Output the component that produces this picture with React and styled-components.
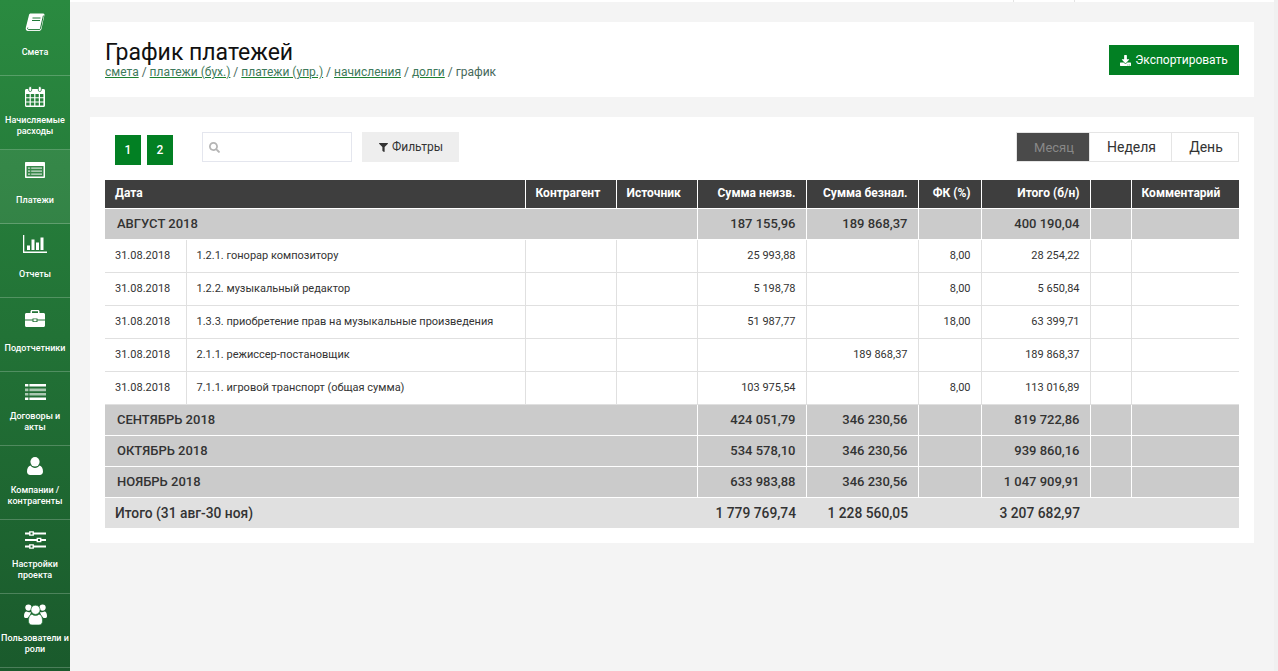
import React from "react";
import styled, { createGlobalStyle } from "styled-components";
import { FaDownload, FaFilter, FaSearch } from "react-icons/fa";

const Global = createGlobalStyle`
  html, body { margin: 0; padding: 0; height: 100%; overflow: hidden; background: #f4f4f4; }
  body { font-family: Roboto, "Liberation Sans", sans-serif; color: #333; }
  #root { height: 100%; }
  * { box-sizing: border-box; }
`;

const Layout = styled.div`
  display: flex;
  width: 1278px;
  height: 671px;
  overflow: hidden;
`;
const Sidebar = styled.nav`
  width: 70px;
  flex: none;
  height: 671px;
  padding-top: 2px;
  background: linear-gradient(180deg, #2a8a40 0%, #1a5a2c 100%);
  overflow: hidden;
`;
const NavItem = styled.a`
  display: flex;
  flex-direction: column;
  align-items: center;
  height: 74px;
  padding-top: 9px;
  border-bottom: 1px solid rgba(255, 255, 255, 0.22);
  background: ${(p) => (p.$active ? "rgba(255,255,255,0.07)" : "transparent")};
  color: #fff;
  font-size: 9px;
  font-weight: 500;
  line-height: 10.5px;
  text-align: center;
  white-space: nowrap;
`;
const NavIcon = styled.span`
  height: 22px;
  display: flex;
  align-items: center;
  justify-content: center;
  margin-bottom: ${(p) => p.$mb ?? 14}px;
`;
const Main = styled.main`
  flex: 1;
  min-width: 0;
  padding: 0 20px;
`;
const ScrollTrack = styled.div`
  width: 4px;
  flex: none;
  background: #f0f0f0;
`;
const TopStrip = styled.div`
  height: 2px;
  margin: 0 -20px 20px;
  background: #fff;
  display: flex;
  justify-content: flex-end;
  padding-right: 199px;
`;
const TopCell = styled.i`
  width: 62px;
  height: 2px;
  border-left: 1px solid #e3e3e3;
  border-right: 1px solid #e3e3e3;
`;
const HeaderCard = styled.section`
  height: 75px;
  background: #fff;
  padding: 17px 15px 0;
  display: flex;
  justify-content: space-between;
  margin-bottom: 20px;
`;
const Title = styled.h1`
  margin: 0;
  font-size: 23px;
  line-height: 28px;
  height: 26px;
  font-weight: 400;
  color: #111;
`;
const Crumbs = styled.div`
  font-size: 12px;
  line-height: 15px;
  color: #46685a;
`;
const Crumb = styled.a`
  color: #3f7a5c;
  text-decoration: underline;
  text-decoration-color: #1c8030;
`;
const ExportButton = styled.button`
  width: 130px;
  height: 30px;
  margin-top: 6px;
  border: 0;
  background: #028023;
  color: #fff;
  font: 400 12px Roboto, sans-serif;
  display: flex;
  align-items: center;
  justify-content: center;
  gap: 4px;
`;
const TableCard = styled.section`
  height: 426px;
  background: #fff;
  padding: 15px;
`;
const Toolbar = styled.div`
  display: flex;
  height: 48px;
  align-items: flex-start;
`;
const Pager = styled.div`
  display: flex;
  gap: 6px;
  margin: 3px 0 0 10px;
  width: 87px;
`;
const Page = styled.span`
  width: 26px;
  height: 30px;
  background: #028023;
  color: #fff;
  font-size: 12px;
  font-weight: 500;
  display: flex;
  align-items: center;
  justify-content: center;
`;
const Search = styled.div`
  width: 150px;
  height: 30px;
  border: 1px solid #e4e6ee;
  display: flex;
  align-items: center;
  padding-left: 6px;
  color: #b5b5b5;
  font-size: 11px;
`;
const FilterButton = styled.button`
  width: 97px;
  height: 30px;
  margin-left: 10px;
  padding-left: 7px;
  border: 0;
  background: #eee;
  color: #333;
  font: 400 12px Roboto, sans-serif;
  display: flex;
  align-items: center;
  justify-content: center;
  gap: 4px;
`;
const Segments = styled.div`
  margin-left: auto;
  display: flex;
  height: 30px;
  border: 1px solid #e5e5e5;
`;
const Segment = styled.span`
  width: ${(p) => p.$w}px;
  display: flex;
  align-items: center;
  justify-content: center;
  font-size: ${(p) => (p.$active ? 13 : 14)}px;
  background: ${(p) => (p.$active ? "#4a4a4a" : "#fff")};
  color: ${(p) => (p.$active ? "#888" : "#333")};
  border-left: ${(p) => (p.$first ? "0" : "1px solid #e5e5e5")};
  padding-left: 2px;
`;
const Table = styled.table`
  width: 1134px;
  table-layout: fixed;
  border-collapse: collapse;
  font-size: 11px;
`;
const Th = styled.th`
  height: 28px;
  padding: 0 10px 2px;
  background: #3e3e3e;
  color: #fff;
  font-size: 12px;
  font-weight: 700;
  text-align: ${(p) => p.$align || "left"};
  border-left: 1px solid #fff;
  border-bottom: 1px solid #fff;
  &:first-child { border-left: 0; }
`;
const Td = styled.td`
  height: 33px;
  padding: 0 10px;
  color: #333;
  text-align: ${(p) => p.$align || "left"};
  border: 1px solid #e0e0e0;
  border-top: 0;
  &:first-child { border-left: 0; }
  &:last-child { border-right: 0; }
`;
const GroupRow = styled.tr`
  background: ${(p) => (p.$total ? "#e0e0e0" : "#cbcbcb")};
`;
const GroupCell = styled.td`
  height: 31px;
  padding: 0 10px 0 ${(p) => (p.$total ? 10 : p.$pad ? 12 : 10)}px;
  font-size: ${(p) => (p.$total ? 13.8 : 13)}px;
  font-weight: 500;
  color: #333;
  text-align: ${(p) => p.$align || "left"};
  border-left: ${(p) => (p.$total ? "0" : "1px solid #fff")};
  border-bottom: ${(p) => (p.$total ? "0" : "1px solid #fff")};
  &:first-child { border-left: 0; }
`;

const BG = "#1f7a38";

const BookIcon = () => (
  <svg width="20" height="19" viewBox="0 0 20 19" fill="#fff">
    <path d="M5.6 0.5H18.2C19.2 0.5 19.7 1.3 19.4 2.3L16.6 15.6C16.3 17 15.3 18 14.1 18H3C1.4 18 0.4 16.4 0.8 14.8L4 2C4.3 1 4.8 0.5 5.6 0.5Z" />
    <path d="M2.8 14.6C2.2 15.6 2.8 16.6 3.7 16.6H14.2C15 16.6 15.3 16 15.5 15.4L18.4 2.6" fill="none" stroke={BG} strokeWidth="1" />
    <path d="M7.5 5H15.5M7 7.5H15" stroke={BG} strokeWidth="1" />
  </svg>
);

const calendarCells = [0, 1, 2].flatMap((r) =>
  [0, 1, 2, 3].map((c) => {
    const x = 1.2 + c * 4.6;
    const y = 8 + r * 4.2;
    return `M${x} ${y}h3.4v3.2h-3.4z`;
  })
).join("");
const CalendarIcon = () => (
  <svg width="20" height="21" viewBox="0 0 20 21" fill="#fff">
    <path fillRule="evenodd" d={`M1.5 3H18.5C19.4 3 20 3.6 20 4.5V19.5C20 20.4 19.4 21 18.5 21H1.5C.6 21 0 20.4 0 19.5V4.5C0 3.6.6 3 1.5 3Z${calendarCells}`} />
    <rect x="3.7" y="0.5" width="3" height="5" rx="1.4" stroke={BG} strokeWidth="0.8" />
    <rect x="13.3" y="0.5" width="3" height="5" rx="1.4" stroke={BG} strokeWidth="0.8" />
  </svg>
);

const ListAltIcon = () => (
  <svg width="20" height="16" viewBox="0 0 20 16" fill="#fff">
    <path fillRule="evenodd" d="M1 0H19C19.6 0 20 .4 20 1V15C20 15.6 19.6 16 19 16H1C.4 16 0 15.6 0 15V1C0 .4.4 0 1 0ZM1.5 4V14.5H18.5V4Z" />
    <path d="M3 5.5H5.2V6.8H3ZM6.2 5.5H17V6.8H6.2ZM3 8.5H5.2V9.8H3ZM6.2 8.5H17V9.8H6.2ZM3 11.4H5.2V12.7H3ZM6.2 11.4H17V12.7H6.2Z" opacity="0.75" />
  </svg>
);

const ChartIcon = () => (
  <svg width="24" height="18" viewBox="0 0 24 18" fill="#fff">
    <path d="M0 0H1.3V16.5H24V18H0ZM4 10.5H7V15H4ZM8.5 4.5H11.5V15H8.5ZM13 7.5H16V15H13ZM17.5 2.5H20.5V15H17.5Z" />
  </svg>
);

const BriefcaseIcon = () => (
  <svg width="20" height="17" viewBox="0 0 20 17" fill="#fff">
    <path fillRule="evenodd" d="M7 0H13C13.8 0 14.5 .6 14.5 1.5V3H18.5C19.4 3 20 3.6 20 4.5V9.5H12.5V8.5H7.5V9.5H0V4.5C0 3.6.6 3 1.5 3H5.5V1.5C5.5 .6 6.2 0 7 0ZM7 1.3V3H13V1.3Z" />
    <path d="M0 10.5H7.5V12H12.5V10.5H20V15.5C20 16.4 19.4 17 18.5 17H1.5C.6 17 0 16.4 0 15.5ZM8.5 9.3H11.5V11.2H8.5Z" />
  </svg>
);

const ListIcon = () => (
  <svg width="21" height="16" viewBox="0 0 21 16" fill="#fff">
    <path d="M0 0H3.4V2.6H0ZM4.4 0H21V2.6H4.4ZM0 13.4H3.4V16H0ZM4.4 13.4H21V16H4.4Z" />
    <path d="M0 4.5H3.4V7.2H0ZM4.4 4.5H21V7.2H4.4ZM0 8.9H3.4V11.6H0ZM4.4 8.9H21V11.6H4.4Z" opacity="0.62" />
  </svg>
);

const UserIcon = () => (
  <svg width="16" height="18" viewBox="0 0 16 18" fill="#fff">
    <ellipse cx="8" cy="4.8" rx="4.6" ry="4.8" />
    <path d="M0 14.6C0 11.6 1.4 9 3.4 8.6C4.6 10.2 6.2 10.9 8 10.9C9.8 10.9 11.4 10.2 12.6 8.6C14.6 9 16 11.6 16 14.6C16 16.8 14.6 18 12.8 18H3.2C1.4 18 0 16.8 0 14.6Z" />
  </svg>
);

const slider = (y, x) =>
  `M0 ${y - 0.9}H${x - 2.4}V${y + 0.9}H0Z` +
  `M${x + 2.4} ${y - 0.9}H21V${y + 0.9}H${x + 2.4}Z` +
  `M${x - 2.4} ${y - 2.3}H${x + 2.4}V${y + 2.3}H${x - 2.4}Z` +
  `M${x - 1} ${y - 1}V${y + 1}H${x + 1}V${y - 1}Z`;
const SlidersIcon = () => (
  <svg width="21" height="18" viewBox="0 0 21 18" fill="#fff">
    <path fillRule="evenodd" d={slider(2.5, 6.5) + slider(9, 14) + slider(15.5, 6.5)} />
  </svg>
);

const UsersIcon = () => (
  <svg width="23" height="21" viewBox="0 0 23 21" fill="#fff">
    <circle cx="4.4" cy="3.6" r="3.1" />
    <circle cx="18.6" cy="3.6" r="3.1" />
    <path d="M0 12C0 9.6 1 7.6 2.6 7.6C4 8.6 6 8.4 7 8C6.6 10.5 5 12.5 3.5 14H1.4C.5 14 0 13.2 0 12ZM23 12C23 9.6 22 7.6 20.4 7.6C19 8.6 17 8.4 16 8C16.4 10.5 18 12.5 19.5 14H21.6C22.5 14 23 13.2 23 12Z" />
    <circle cx="11.5" cy="5.8" r="4.6" stroke={BG} strokeWidth="0.7" />
    <path d="M4.5 17C4.5 13.4 5.8 10.4 8 10.2C9 11 10.2 11.4 11.5 11.4C12.8 11.4 14 11 15 10.2C17.2 10.4 18.5 13.4 18.5 17C18.5 19.6 17 21 15 21H8C6 21 4.5 19.6 4.5 17Z" stroke={BG} strokeWidth="0.7" />
  </svg>
);

const nav = [
  { label: ["Смета"], icon: <BookIcon /> },
  { label: ["Начисляемые", "расходы"], icon: <CalendarIcon />, mb: 8 },
  { label: ["Платежи"], icon: <ListAltIcon /> },
  { label: ["Отчеты"], icon: <ChartIcon /> },
  { label: ["Подотчетники"], icon: <BriefcaseIcon /> },
  { label: ["Договоры и", "акты"], icon: <ListIcon />, mb: 8 },
  { label: ["Компании /", "контрагенты"], icon: <UserIcon />, mb: 8 },
  { label: ["Настройки", "проекта"], icon: <SlidersIcon />, mb: 8 },
  { label: ["Пользователи и", "роли"], icon: <UsersIcon />, mb: 8 },
].map((n, i) => ({ ...n, active: i === 2 }));

const columns = [81, 339, 91, 81, 109, 112, 63, 109, 41, 108];
const rows = [
  ["1.2.1. гонорар композитору", "25 993,88", "", "8,00", "28 254,22"],
  ["1.2.2. музыкальный редактор", "5 198,78", "", "8,00", "5 650,84"],
  ["1.3.3. приобретение прав на музыкальные произведения", "51 987,77", "", "18,00", "63 399,71"],
  ["2.1.1. режиссер-постановщик", "", "189 868,37", "", "189 868,37"],
  ["7.1.1. игровой транспорт (общая сумма)", "103 975,54", "", "8,00", "113 016,89"],
];

const Group = ({ name, a, b, c, total }) => (
  <GroupRow $total={total}>
    <GroupCell colSpan={4} $pad $total={total}>{name}</GroupCell>
    <GroupCell $align="right" $total={total}>{a}</GroupCell>
    <GroupCell $align="right" $total={total}>{b}</GroupCell>
    <GroupCell $total={total} />
    <GroupCell $align="right" $total={total}>{c}</GroupCell>
    <GroupCell $total={total} />
    <GroupCell $total={total} />
  </GroupRow>
);

export default function App() {
  return (
    <Layout>
      <Global />
      <Sidebar>
        {nav.map((n) => (
          <NavItem key={n.label[0]} $active={n.active}>
            <NavIcon $mb={n.mb}>{n.icon}</NavIcon>
            {n.label.map((l) => <span key={l}>{l}</span>)}
          </NavItem>
        ))}
      </Sidebar>
      <Main>
        <TopStrip><TopCell /></TopStrip>
        <HeaderCard>
          <div>
            <Title>График платежей</Title>
            <Crumbs>
              <Crumb>смета</Crumb> / <Crumb>платежи (бух.)</Crumb> / <Crumb>платежи (упр.)</Crumb> / <Crumb>начисления</Crumb> / <Crumb>долги</Crumb> / график
            </Crumbs>
          </div>
          <ExportButton><FaDownload size={11} /> Экспортировать</ExportButton>
        </HeaderCard>
        <TableCard>
          <Toolbar>
            <Pager><Page>1</Page><Page>2</Page></Pager>
            <Search><FaSearch /></Search>
            <FilterButton><FaFilter size={9} /> Фильтры</FilterButton>
            <Segments>
              <Segment $w={72} $active $first>Месяц</Segment>
              <Segment $w={82}>Неделя</Segment>
              <Segment $w={67}>День</Segment>
            </Segments>
          </Toolbar>
          <Table>
            <colgroup>{columns.map((w, i) => <col key={i} width={w} />)}</colgroup>
            <thead>
              <tr>
                <Th colSpan={2}>Дата</Th>
                <Th>Контрагент</Th>
                <Th>Источник</Th>
                <Th $align="right">Сумма неизв.</Th>
                <Th $align="right">Сумма безнал.</Th>
                <Th $align="right">ФК (%)</Th>
                <Th $align="right">Итого (б/н)</Th>
                <Th />
                <Th>Комментарий</Th>
              </tr>
            </thead>
            <tbody>
              <Group name="АВГУСТ 2018" a="187 155,96" b="189 868,37" c="400 190,04" />
              {rows.map((r) => (
                <tr key={r[0]}>
                  <Td>31.08.2018</Td>
                  <Td>{r[0]}</Td>
                  <Td />
                  <Td />
                  <Td $align="right">{r[1]}</Td>
                  <Td $align="right">{r[2]}</Td>
                  <Td $align="right">{r[3]}</Td>
                  <Td $align="right">{r[4]}</Td>
                  <Td />
                  <Td />
                </tr>
              ))}
              <Group name="СЕНТЯБРЬ 2018" a="424 051,79" b="346 230,56" c="819 722,86" />
              <Group name="ОКТЯБРЬ 2018" a="534 578,10" b="346 230,56" c="939 860,16" />
              <Group name="НОЯБРЬ 2018" a="633 983,88" b="346 230,56" c="1 047 909,91" />
              <Group name="Итого (31 авг-30 ноя)" a="1 779 769,74" b="1 228 560,05" c="3 207 682,97" total />
            </tbody>
          </Table>
        </TableCard>
      </Main>
      <ScrollTrack />
    </Layout>
  );
}
